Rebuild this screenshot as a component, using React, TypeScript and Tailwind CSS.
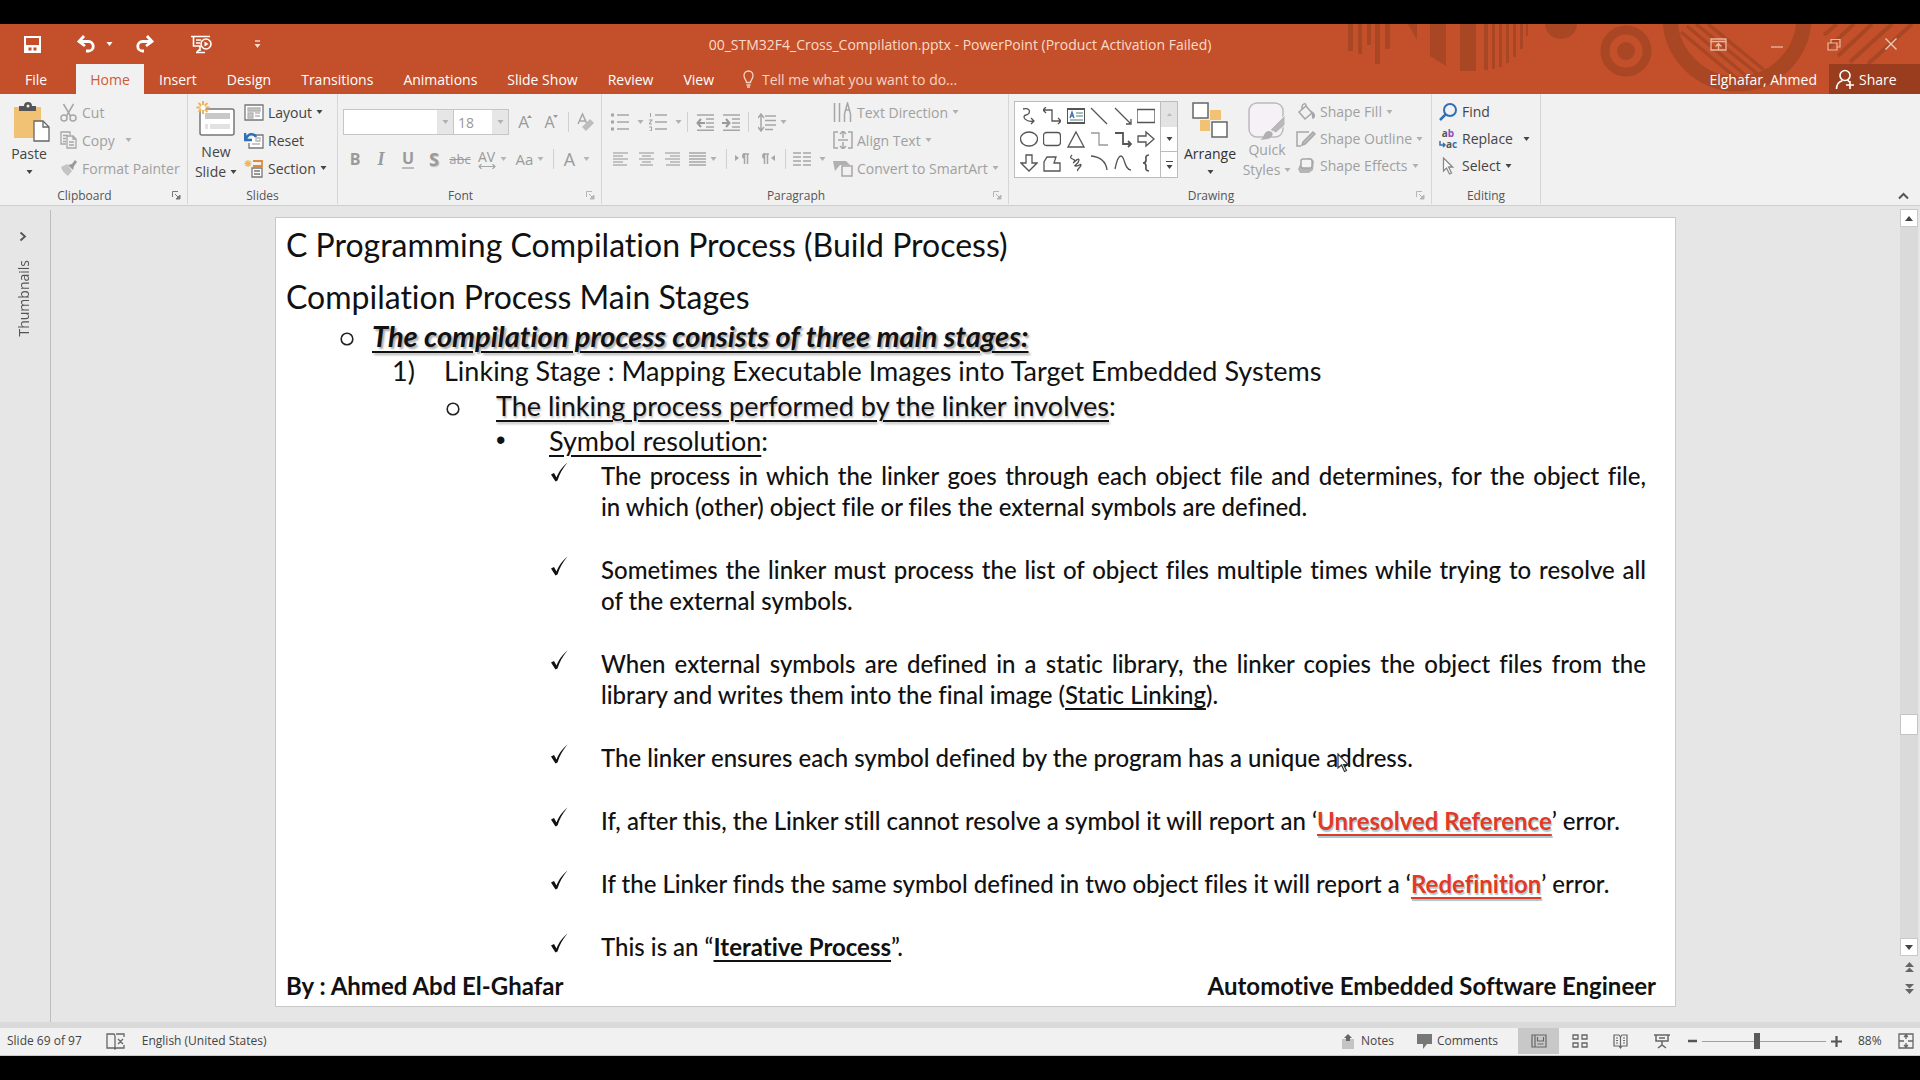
import type { ReactNode } from "react";

const GREY = "#a6a6a6";
const DARK = "#555555";

type SvgProps = { w: number; h: number; children: ReactNode; stroke?: string; sw?: number; className?: string };

function Svg({ w, h, children, stroke = GREY, sw = 1.5, className = "" }: SvgProps) {
  return (
    <svg width={w} height={h} viewBox={`0 0 ${w} ${h}`} fill="none" stroke={stroke} strokeWidth={sw} className={`shrink-0 ${className}`} aria-hidden="true">
      {children}
    </svg>
  );
}

function Caret({ color = "#444444" }: { color?: string }) {
  return (
    <svg width="7" height="4" viewBox="0 0 7 4" className="shrink-0" aria-hidden="true">
      <path d="M0.5 0h6L3.5 4z" fill={color} />
    </svg>
  );
}

function Sep() {
  return <span className="h-5 w-px shrink-0 bg-[#d0d0d0]" />;
}

function Launcher({ dim = false }: { dim?: boolean }) {
  return (
    <button type="button" aria-label="More options" className="absolute bottom-0.5 right-1 p-0.5">
      <Svg w={9} h={9} stroke={dim ? "#b5b5b5" : "#777777"} sw={1}>
        <path d="M0.5 6V0.5H6" />
        <path d="M3 3l4 4M8 4v4H4z" fill={dim ? "#b5b5b5" : "#777777"} />
      </Svg>
    </button>
  );
}

function Group({ label, width, launcher, children }: { label: string; width: string; launcher?: "on" | "dim"; children: ReactNode }) {
  return (
    <section aria-label={label} className={`relative flex shrink-0 flex-col border-r border-[#d6d6d6] ${width}`}>
      <div className="flex flex-1">{children}</div>
      <div className={`text-center text-[12px] leading-4 text-[#555555] ${launcher ? "pr-[18px]" : ""}`}>{label}</div>
      {launcher && <Launcher dim={launcher === "dim"} />}
    </section>
  );
}

function RowButton({ icon, label, caret, dim, wide, tight }: { icon: ReactNode; label: string; caret?: boolean; dim?: boolean; wide?: boolean; tight?: boolean }) {
  return (
    <button type="button" className={`flex items-center gap-1 whitespace-nowrap text-[14px] ${tight ? "h-[27px]" : "h-7"} ${dim ? "text-[#a0a0a0]" : "text-[#444444]"}`}>
      <span className="flex w-5 justify-center">{icon}</span>
      {label}
      {caret && (
        <span className={wide ? "ml-1.5" : ""}>
          <Caret color={dim ? "#b0b0b0" : "#444444"} />
        </span>
      )}
    </button>
  );
}

function IconButton({ label, width = "w-[26px]", children }: { label: string; width?: string; children: ReactNode }) {
  return (
    <button type="button" aria-label={label} className={`flex h-6 shrink-0 items-center justify-center gap-1 text-[#9a9a9a] ${width}`}>
      {children}
    </button>
  );
}

function Lines({ rows }: { rows: [number, number][] }) {
  return <path d={rows.map(([a, b], i) => `M${a} ${2 + i * 3}H${b}`).join("")} />;
}

function TitleBar() {
  return (
    <div className="relative grid h-10 grid-cols-[1fr_auto_1fr] items-center text-white">
      <div className="flex items-center pl-6">
        <button type="button" aria-label="Save">
          <Svg w={17} h={17} stroke="#ffffff" sw={2}>
            <path d="M1 1h15v15H1z" />
            <path d="M1 9h15v7H1z" fill="#ffffff" stroke="none" />
            <path d="M4.5 11.5h3v3h-3zM9.5 11.5h3v3h-3z" fill="#c3502a" stroke="none" />
          </Svg>
        </button>
        <button type="button" aria-label="Undo" className="ml-9">
          <Svg w={19} h={18} stroke="#ffffff" sw={2.8}>
            <path d="M7 1L2 6.500l6 4.500M2.500 6.500h9a4.500 4.500 0 010 9.500H9" />
          </Svg>
        </button>
        <button type="button" aria-label="Undo history" className="ml-[10px]">
          <Caret color="#ffffff" />
        </button>
        <button type="button" aria-label="Redo" className="ml-[22px]">
          <Svg w={19} h={18} stroke="#ffffff" sw={2.8}>
            <path d="M12 1l5 5.500-6 4.500M16.500 6.500h-9a4.500 4.500 0 000 9.500H9" />
          </Svg>
        </button>
        <button type="button" aria-label="Start from beginning" className="ml-[37px]">
          <Svg w={21} h={19} stroke="#ffffff" sw={1.6}>
            <path d="M0 1.500h19M2.500 1.500v9.500h7M5 5h5M5 8h4M9 11v5M5 17.500h9M9 14l-3 3" />
            <circle cx="15" cy="9" r="5" />
            <path d="M13.500 6.500v5l4-2.500z" fill="#ffffff" stroke="none" />
          </Svg>
        </button>
        <button type="button" aria-label="Customize quick access" className="ml-[42px]">
          <Svg w={7} h={9} stroke="#f8d8cc" sw={1.4}>
            <path d="M1 1h5" />
            <path d="M0.500 4h6l-3 4z" fill="#f8d8cc" stroke="none" />
          </Svg>
        </button>
      </div>
      <h1 className="whitespace-nowrap text-[14px] text-[#fbdccb]">00_STM32F4_Cross_Compilation.pptx - PowerPoint (Product Activation Failed)</h1>
      <div className="flex items-center justify-end gap-[43px] pr-[22px]">
        <button type="button" aria-label="Ribbon display options">
          <Svg w={17} h={13} stroke="#e9b8a4" sw={1.3}>
            <path d="M1 1h15v11H1zM1 3.500h15M8.500 12V6M5.500 8.500l3-3 3 3" />
          </Svg>
        </button>
        <button type="button" aria-label="Minimize">
          <Svg w={14} h={13} stroke="#e9b8a4" sw={1.3}>
            <path d="M1 9h12" />
          </Svg>
        </button>
        <button type="button" aria-label="Restore">
          <Svg w={14} h={13} stroke="#e9b8a4" sw={1.2}>
            <path d="M1 5h9v7H1zM4 5V1.500h9V9h-3" />
          </Svg>
        </button>
        <button type="button" aria-label="Close">
          <Svg w={14} h={14} stroke="#f0cbbb" sw={1.4}>
            <path d="M1.500 1.500l11 11M12.500 1.500l-11 11" />
          </Svg>
        </button>
      </div>
    </div>
  );
}

function HeaderArt() {
  return (
    <svg width="580" height="70" viewBox="1340 24 580 70" className="absolute right-0 top-0" fill="#a94725" stroke="none" aria-hidden="true">
      <path d="M1348 24h5v27h-5zM1358 24h4v30h-4zM1367 24h4v21h-4zM1375 24h5v40h-5zM1385 24h5v25h-5zM1408 24h9v16z" />
      <path d="M1430 24h16v42l-16-10zM1460 24h16v47h-16zM1484 24h4v46h-4zM1492 24h3v45h-3zM1499 24h3v43h-3zM1506 24h3v39h-3zM1513 24h3v33h-3zM1520 24h3v25h-3zM1526 24h2v12h-2z" />
      <path d="M1545 24a16 15 0 0032 0z" />
      <circle cx="1626" cy="51" r="21" fill="none" stroke="#a94725" strokeWidth="9" />
      <circle cx="1626" cy="51" r="9" />
      <circle cx="1737" cy="17" r="67" fill="none" stroke="#a94725" strokeWidth="15" />
      <path d="M1681 32l60 50M1687 26l64 54M1696 24l64 52M1708 24l56 46" stroke="#a94725" strokeWidth="3.500" />
      <path d="M1824 35l13-11M1828 48l26-24M1838 56l34-32M1850 62l42-38M1868 64l44-40" stroke="#a94725" strokeWidth="4" />
    </svg>
  );
}

function TabBar() {
  const tabs = ["Insert", "Design", "Transitions", "Animations", "Slide Show", "Review", "View"];
  return (
    <nav className="relative flex h-[30px] items-stretch text-[14px] text-white" aria-label="Ribbon tabs">
      <button type="button" className="w-[76px] pr-1">File</button>
      <button type="button" className="w-[68px] bg-[#f1f1f1] text-[#cf5a33]">Home</button>
      {tabs.map((t) => (
        <button key={t} type="button" className="whitespace-nowrap px-[15px]">{t}</button>
      ))}
      <div className="ml-[14px] flex items-center gap-2">
        <Svg w={11} h={18} stroke="#f9d3c2" sw={1.3}>
          <path d="M3.500 12.500C3.500 10 1 9 1 5.500a4.500 4.500 0 019 0c0 3.500-2.500 4.500-2.500 7zM3.500 15h4M4 17h3" />
        </Svg>
        <input aria-label="Tell me what you want to do" className="w-[230px] bg-transparent outline-none placeholder:text-[#f9d3c2]" placeholder="Tell me what you want to do..." />
      </div>
      <div className="ml-auto flex">
        <button type="button" className="px-3">Elghafar, Ahmed</button>
        <button type="button" className="flex w-[91px] items-center gap-1 bg-[#9a3d1e] pl-1.5">
          <Svg w={20} h={21} stroke="#ffffff" sw={1.6}>
            <circle cx="10" cy="6.500" r="5" />
            <path d="M1.500 20c0-5 3-7.500 6-8.500M12.500 11l2 2M15 12v8M11 16h8" />
          </Svg>
          Share
        </button>
      </div>
    </nav>
  );
}

function Clipboard() {
  return (
    <Group label="Clipboard" width="w-[188px]" launcher="on">
      <button type="button" className="flex w-[58px] flex-col items-center pt-2 text-[14px] text-[#444444]">
        <svg width="36" height="40" viewBox="0 0 36 40" className="ml-1.5" aria-hidden="true">
          <path d="M0 5h27v31H0z" fill="#f2c274" />
          <path d="M5 4h5a4 4 0 018 0h4v5H5z" fill="#555" />
          <circle cx="14" cy="4" r="1.500" fill="#f1f1f1" />
          <path d="M20 19h9l6 6v14H20z" fill="#fff" stroke="#666" strokeWidth="1.300" />
          <path d="M29 19v6h6" fill="none" stroke="#666" strokeWidth="1.300" />
        </svg>
        <span className="leading-6">Paste</span>
        <span className="pt-1"><Caret /></span>
      </button>
      <div className="flex flex-col pt-1">
        <RowButton dim label="Cut" icon={<Svg w={17} h={19}><path d="M3.500 1l7 12M13.500 1l-7 12" /><circle cx="4" cy="15" r="3" /><circle cx="13" cy="15" r="3" /></Svg>} />
        <RowButton dim caret wide label="Copy" icon={<Svg w={17} h={18} sw={1.300}><path d="M10 4V1H1v12h5M3 4.500h5M3 7.500h3M3 10.500h3M7 5h6l3 3v9H7zM13 5v3h3M9 11h5M9 14h5" /></Svg>} />
        <RowButton dim label="Format Painter" icon={<Svg w={17} h={17} stroke="none"><path d="M1 7l6-3 5 7-4 5c-3-2-6-5-7-9z" fill="#c4c4c4" /><path d="M8 5l4-1 3-4 2 2-3 4-1 4z" fill="#999" /></Svg>} />
      </div>
    </Group>
  );
}

function Slides() {
  return (
    <Group label="Slides" width="w-[150px]">
      <button type="button" className="flex w-[56px] flex-col items-center pt-1.5 text-[14px] leading-5 text-[#444444]">
        <svg width="40" height="38" viewBox="0 0 40 38" className="shrink-0" aria-hidden="true">
          <rect x="4" y="9" width="34" height="26" rx="2" fill="#fff" stroke="#777" strokeWidth="1.500" />
          <path d="M9 13h25v6H9z" fill="#c8c8c8" />
          <path d="M9 24h3v5H9zM14 24h20v5H14z" fill="#e2e2e2" />
          <path d="M7 1v13M.5 7.500h13M2.500 3l9 9M11.500 3l-9 9" stroke="#eeb65c" strokeWidth="2" />
          <circle cx="7" cy="7.500" r="2.500" fill="#fff" />
        </svg>
        <span className="pt-1">New</span>
        <span className="flex items-center gap-1">Slide <Caret /></span>
      </button>
      <div className="flex flex-col pt-1">
        <RowButton caret label="Layout" icon={<Svg w={20} h={17} stroke="#777" sw={1.300}><path d="M1 1h18v15H1z" fill="#fff" /><path d="M4 4h12v3H4zM4 9h5v5H4zM11 9h5M11 12h5" fill="#c4c4c4" stroke="#b5b5b5" /></Svg>} />
        <RowButton label="Reset" icon={<Svg w={20} h={17} stroke="#777" sw={1.300}><path d="M10 3h9v13H5v-5" fill="#fff" /><path d="M12 6h4v3h-4zM8 12h8" stroke="#b5b5b5" /><path d="M1 1v7h7M2 7c2-6 8-6 10-2" stroke="#2f6fb5" strokeWidth="2.500" /></Svg>} />
        <RowButton caret label="Section" icon={<Svg w={20} h={19} stroke="#777" sw={1.300}><path d="M9 2h9v5H9" stroke="#e08b3c" strokeWidth="1.800" /><path d="M8 9h10v9H8zM10 12h6M10 15h6" fill="#fff" /><path d="M4 1v7M.5 4.500h7M1.500 2l5 5M6.500 2l-5 5" stroke="#eeb65c" /></Svg>} />
      </div>
    </Group>
  );
}

function FontGroup() {
  return (
    <Group label="Font" width="w-[264px]" launcher="dim">
      <div className="flex flex-col pl-[5px] pt-[15px]">
        <div className="flex h-[26px] items-center">
          <span className="relative flex h-[26px] w-[111px] border border-[#c6c6c6] bg-white">
            <select aria-label="Font" className="w-full appearance-none bg-transparent px-1 text-[14px]">
              <option></option>
            </select>
            <span className="pointer-events-none flex w-4 shrink-0 items-center justify-center bg-[#e6e6e6]"><Caret color="#b0b0b0" /></span>
          </span>
          <span className="relative flex h-[26px] w-[55px] border border-l-0 border-[#c6c6c6] bg-white">
            <select aria-label="Font size" className="w-full appearance-none bg-transparent px-1 text-[14px] text-[#999999]">
              <option>18</option>
            </select>
            <span className="pointer-events-none flex w-4 shrink-0 items-center justify-center bg-[#e6e6e6]"><Caret color="#b0b0b0" /></span>
          </span>
          <span className="w-[3px]" />
          <IconButton label="Increase font size"><span className="text-[17px]">A</span><span className="-ml-1.5 -mt-3"><svg width="5" height="3" viewBox="0 0 5 3" aria-hidden="true"><path d="M0 3h5L2.500 0z" fill="#999" /></svg></span></IconButton>
          <IconButton label="Decrease font size"><span className="text-[16px]">A</span><span className="-ml-1.5 -mt-3"><svg width="5" height="3" viewBox="0 0 5 3" aria-hidden="true"><path d="M0 0h5L2.500 3z" fill="#999" /></svg></span></IconButton>
          <span className="w-1" />
          <Sep />
          <span className="w-1" />
          <IconButton label="Clear formatting">
            <Svg w={18} h={20}><path d="M1 12L5.500 2 10 12M2.500 9h6" /><path d="M5 15l8-8 4 4-8 8z" fill="#bdbdbd" stroke="none" /></Svg>
          </IconButton>
        </div>
        <div className="flex h-[47px] items-center text-[16px] leading-6">
          <IconButton label="Bold" width="w-[24px]"><b>B</b></IconButton>
          <IconButton label="Italic" width="w-[28px]"><i className="font-['Liberation_Serif'] text-[18px] font-bold">I</i></IconButton>
          <IconButton label="Underline"><span className="border-b-2 border-[#bbbbbb] font-bold leading-[18px]">U</span></IconButton>
          <IconButton label="Shadow"><b className="text-[18px] [text-shadow:1px_1px_1px_#bbb]">S</b></IconButton>
          <IconButton label="Strikethrough"><span className="text-[13px] line-through">abc</span></IconButton>
          <IconButton label="Character spacing" width="w-[38px]">
            <span className="flex flex-col items-center"><span className="text-[14px] leading-[15px]">AV</span><Svg w={18} h={5} sw={1.200}><path d="M1 2.500h16M3.500 0L1 2.500 3.500 5M14.500 0L17 2.500 14.500 5" /></Svg></span>
            <Caret color="#b5b5b5" />
          </IconButton>
          <IconButton label="Change case" width="w-[38px]"><span className="text-[15px]">Aa</span><Caret color="#b5b5b5" /></IconButton>
          <span className="w-1" />
          <Sep />
          <IconButton label="Font color" width="w-[46px]"><span className="pr-1 text-[18px]">A</span><Caret color="#b5b5b5" /></IconButton>
        </div>
      </div>
    </Group>
  );
}

function Paragraph() {
  const c = "#b0b0b0";
  return (
    <Group label="Paragraph" width="w-[407px]" launcher="dim">
      <div className="flex w-[228px] shrink-0 flex-col pl-1.5 pt-[15px]">
        <div className="flex h-[26px] items-center">
          <IconButton label="Bullets" width="w-[38px]">
            <Svg w={18} h={18}><path d="M6 2h12M6 9h12M6 16h12" /><path d="M0 2h3M0 9h3M0 16h3" strokeWidth="3" /></Svg>
            <span className="pl-1"><Caret color={c} /></span>
          </IconButton>
          <IconButton label="Numbering" width="w-[38px]">
            <Svg w={18} h={18}><path d="M6 2h12M6 9h12M6 16h12" /><path d="M1.500 0v4M0 7h3L0 11h3M0 14h2.500v4H0" strokeWidth="1.100" /></Svg>
            <span className="pl-1"><Caret color={c} /></span>
          </IconButton>
          <span className="w-[3px]" />
          <Sep />
          <span className="w-1" />
          <IconButton label="Decrease indent"><Svg w={18} h={17} sw={1.500}><path d="M1 1h17M10 5h8M10 9h8M10 13h8M1 16.300h17" /><path d="M9 9H2M5 5L1.500 9 5 13" stroke="#999" strokeWidth="2" /></Svg></IconButton>
          <IconButton label="Increase indent"><Svg w={18} h={17} sw={1.500}><path d="M1 1h17M10 5h8M10 9h8M10 13h8M1 16.300h17" /><path d="M0 9h7M4 5l3.500 4L4 13" stroke="#999" strokeWidth="2" /></Svg></IconButton>
          <span className="w-1" />
          <Sep />
          <span className="w-1" />
          <IconButton label="Line spacing" width="w-[38px]">
            <Svg w={18} h={19}><path d="M7 3h11M7 7.500h11M7 12h11M7 16.500h8" /><path d="M3 1v17M0 5l3-4 3 4M0 14l3 4 3-4" /></Svg>
            <Caret color={c} />
          </IconButton>
        </div>
        <div className="flex h-[47px] items-center">
          <IconButton label="Align left"><Svg w={16} h={16} stroke="#c2c2c2" sw={2}><Lines rows={[[0, 15], [0, 10], [0, 15], [0, 10], [0, 14]]} /></Svg></IconButton>
          <IconButton label="Center"><Svg w={16} h={16} stroke="#c2c2c2" sw={2}><Lines rows={[[0, 15], [3, 12], [0, 15], [3, 12], [1, 14]]} /></Svg></IconButton>
          <IconButton label="Align right"><Svg w={16} h={16} stroke="#c2c2c2" sw={2}><Lines rows={[[0, 15], [5, 15], [0, 15], [5, 15], [1, 15]]} /></Svg></IconButton>
          <IconButton label="Justify" width="w-[34px]"><Svg w={17} h={16}><Lines rows={[[0, 17], [0, 17], [0, 17], [0, 17], [0, 17]]} /></Svg><Caret color={c} /></IconButton>
          <span className="w-1.5" />
          <Sep />
          <span className="w-0.5" />
          <IconButton label="Left to right"><Svg w={16} h={14}><path d="M1 3l4 3-4 3z" fill={GREY} stroke="none" /><path d="M10.500 2v10M13.500 2v10M15 2H9.500" /><path d="M11 1a3 3 0 000 6z" fill={GREY} stroke="none" /></Svg></IconButton>
          <IconButton label="Right to left"><Svg w={16} h={14}><path d="M15 3l-4 3 4 3z" fill={GREY} stroke="none" /><path d="M4.500 2v10M7.500 2v10M9 2H3.500" /><path d="M5 1a3 3 0 000 6z" fill={GREY} stroke="none" /></Svg></IconButton>
          <span className="w-1" />
          <Sep />
          <span className="w-1" />
          <IconButton label="Columns" width="w-[38px]"><Svg w={18} h={16}><path d="M0 2h8M10 2h8M0 6h8M10 6h8M0 10h8M10 10h8M0 14h8M10 14h8" /></Svg><span className="pl-1"><Caret color={c} /></span></IconButton>
        </div>
      </div>
      <div className="flex flex-col pl-[3px] pt-1">
        <RowButton dim caret label="Text Direction" icon={<Svg w={20} h={20}><path d="M1.500 1v19M6.500 1v19M11.500 20v-8M17.500 20v-8M11.500 12L14.500 1l3 11M12 8h5" /></Svg>} />
        <RowButton dim caret label="Align Text" icon={<Svg w={20} h={18}><path d="M5 1H1v16h4M15 1h4v16h-4M5 9h10M10 0v7M7 3l3-3 3 3M10 11v7M7 15l3 3 3-3" /></Svg>} />
        <RowButton dim caret label="Convert to SmartArt" icon={<Svg w={20} h={17}><path d="M0 1h13l4 4H7l-5 6z" fill="#b0b0b0" stroke="none" /><path d="M9 6h10v10H9z" fill="#f1f1f1" /></Svg>} />
      </div>
    </Group>
  );
}

const SHAPES: { name: string; node: ReactNode }[] = [
  { name: "Curved connector", node: <path d="M3 2c8-2 8 5 3 6s0 8 8 6M11 11l3 3-3 3" /> },
  { name: "Elbow connector", node: <path d="M1 3h8v11h9M3 0L0 3l3 3M15 11l3 3-3 3" /> },
  { name: "Text box", node: <><path d="M0 2h18v14H0z" strokeWidth="2" /><path d="M3 11l2-6 2 6M3.500 9h3" stroke="#3f6fb0" /><path d="M9 6h7M9 9h7M3 13h13" stroke="#8aa" /></> },
  { name: "Line", node: <path d="M1 1l16 16" /> },
  { name: "Arrow line", node: <path d="M1 1l16 16M17 12v5h-5" /> },
  { name: "Rectangle", node: <path d="M0 2.500h18v13H0z" /> },
  { name: "Oval", node: <ellipse cx="9" cy="9" rx="8.500" ry="7" /> },
  { name: "Rounded rectangle", node: <rect x="0.500" y="2.500" width="17" height="13" rx="3" /> },
  { name: "Triangle", node: <path d="M9 2l8 15H1z" /> },
  { name: "Elbow", node: <path d="M1 3h8v12h9" stroke="#999" /> },
  { name: "Elbow arrow", node: <path d="M1 3h8v11h8M14 11l3 3-3 3" strokeWidth="1.800" /> },
  { name: "Right arrow", node: <path d="M1 6h8V2l8 7-8 7v-4H1z" /> },
  { name: "Down arrow", node: <path d="M6 1v8H1l8 8 8-8h-5V1z" /> },
  { name: "Freeform", node: <path d="M4 3h9l-2 6h6v8H1V8z" /> },
  { name: "Scribble", node: <path d="M5 1c-5 5 5 3 2 7s5-6 5-2-7 6-3 6 5-3 5-1-5 5-3 6" /> },
  { name: "Arc", node: <path d="M1 2c10 1 15 6 16 14" /> },
  { name: "Curve", node: <path d="M1 15C3 5 5 2 7 2c4 0 3 14 10 14" /> },
  { name: "Brace", node: <path d="M12 1C8 1 9 4 9 6s-1 3-3 3c2 0 3 1 3 3s-1 5 3 5" strokeWidth="1.700" /> },
];

function Drawing() {
  return (
    <Group label="Drawing" width="w-[423px]" launcher="dim">
      <div className="flex pl-[5px] pt-[7px]">
        <div className="flex h-[77px] w-[164px] border border-[#bcbcbc] bg-white">
          <div className="grid flex-1 grid-cols-6 grid-rows-3 p-0.5">
            {SHAPES.map((s) => (
              <button key={s.name} type="button" aria-label={s.name} className="flex items-center justify-center">
                <Svg w={18} h={18} stroke={DARK} sw={1.300}>{s.node}</Svg>
              </button>
            ))}
          </div>
          <div className="flex w-[17px] flex-col border-l border-[#bcbcbc]">
            <button type="button" aria-label="Scroll up" className="flex flex-1 items-center justify-center bg-[#e3e3e3]"><svg width="5" height="3" viewBox="0 0 5 3" aria-hidden="true"><path d="M0 3h5L2.500 0z" fill="#bbb" /></svg></button>
            <button type="button" aria-label="Scroll down" className="flex flex-1 items-center justify-center border-b border-[#bcbcbc]"><Caret /></button>
            <button type="button" aria-label="More shapes" className="flex flex-1 flex-col items-center justify-center gap-[3px]"><span className="h-px w-[7px] bg-[#444444]" /><Caret /></button>
          </div>
        </div>
      </div>
      <button type="button" className="ml-1.5 flex w-[52px] flex-col items-center pt-2 text-[14px] text-[#333333]">
        <svg width="36" height="40" viewBox="0 0 36 40" className="shrink-0" aria-hidden="true">
          <path d="M18 8h11v10H18zM8 18h10v11H8z" fill="#f2c274" />
          <path d="M1 1h15v15H1zM20 20h15v15H20z" fill="#fff" stroke="#666" strokeWidth="1.500" />
        </svg>
        <span className="leading-6">Arrange</span>
        <span className="pt-1"><Caret /></span>
      </button>
      <button type="button" className="ml-1 flex w-[54px] flex-col items-center pt-2 text-[14px] leading-5 text-[#a0a0a0]">
        <svg width="38" height="38" viewBox="0 0 38 38" className="shrink-0" aria-hidden="true">
          <rect x="1" y="1" width="34" height="34" rx="8" fill="#f5f1f6" stroke="#bbb" strokeWidth="1.500" />
          <path d="M12 38c5-2 3-9 9-9 6 1 4 6-1 8z" fill="#b0b0b0" />
          <path d="M22 28L37 13v10l-9 8z" fill="#b8b8b8" stroke="#f1f1f1" />
        </svg>
        <span className="whitespace-nowrap">Quick</span>
        <span className="flex items-center gap-1">Styles <Caret color="#b0b0b0" /></span>
      </button>
      <div className="flex flex-col pl-0.5 pt-1">
        <RowButton tight dim caret label="Shape Fill" icon={<Svg w={18} h={18}><path d="M2 9l7-6 6 7-7 6zM9 3c0-4-4-2-4 1v3" /><path d="M15 9c3 2 3 5 1 6z" fill={GREY} /></Svg>} />
        <RowButton tight dim caret label="Shape Outline" icon={<Svg w={20} h={18}><path d="M13 2H1v14h4" /><path d="M7 12L17 2l2 2L9 14l-3 1z" fill="#c0c0c0" /></Svg>} />
        <RowButton tight dim caret label="Shape Effects" icon={<Svg w={18} h={17}><path d="M1 12L5 3l8-2 4 3-1 9-4 3H3z" fill="#b5b5b5" stroke="none" /><rect x="4" y="2" width="11" height="9" rx="2" fill="#f4f4f4" /></Svg>} />
      </div>
    </Group>
  );
}

function Editing() {
  return (
    <Group label="Editing" width="w-[109px]">
      <div className="flex flex-col pl-1.5 pt-1">
        <RowButton tight label="Find" icon={<Svg w={18} h={18} stroke="#2f6fb5" sw={2}><circle cx="11" cy="7" r="6" /><path d="M7 11l-6 6" strokeWidth="2.500" /></Svg>} />
        <RowButton
          tight
          caret
          wide
          label="Replace"
          icon={
            <span className="flex flex-col text-[10px] font-bold leading-[11px] text-[#555555]">
              <span>a<span className="text-[#8b4fc0]">b</span></span>
              <span className="flex items-center"><Svg w={7} h={7} stroke="#2f6fb5"><path d="M1 0v4h5M4 2l2 2-2 2" /></Svg>a<span className="text-[#2f6fb5]">c</span></span>
            </span>
          }
        />
        <RowButton tight caret label="Select" icon={<Svg w={12} h={18} stroke="#888" sw={1.300}><path d="M1.500 1v13l3-3 3 6 2-1-3-6h4z" fill="#fff" /></Svg>} />
      </div>
    </Group>
  );
}

function Ribbon() {
  return (
    <div className="relative flex h-[112px] border-b border-[#cfcfcf] bg-[#f1f1f1] pb-px">
      <Clipboard />
      <Slides />
      <FontGroup />
      <Paragraph />
      <Drawing />
      <Editing />
      <button type="button" aria-label="Collapse the ribbon" className="ml-auto self-end px-[11px] pb-1">
        <Svg w={11} h={8} stroke="#555" sw={2}><path d="M1 6.500L5.500 2 10 6.500" /></Svg>
      </button>
    </div>
  );
}

function Check() {
  return (
    <svg width="18" height="20" viewBox="0 0 18 20" className="mt-0.5 shrink-0" aria-hidden="true">
      <path d="M1 12.500l3-1.500 2.500 4.500C9 9.500 12 5 17.500 0.500 12.500 6.500 9.500 12 7.500 18.500L5.500 19.500z" fill="#111" />
    </svg>
  );
}

function RingBullet() {
  return (
    <svg width="14" height="14" viewBox="0 0 14 14" className="mt-3.5 shrink-0" fill="none" stroke="#222" strokeWidth="1.600" aria-hidden="true">
      <circle cx="7" cy="7" r="5.800" />
    </svg>
  );
}

const RED = "font-bold text-[#e23a26] underline decoration-2 underline-offset-4 [text-shadow:1px_2px_1px_#a9cdd0]";

const POINTS: ReactNode[] = [
  "The process in which the linker goes through each object file and determines, for the object file, in\u00a0which (other) object file or files the external symbols are defined.",
  "Sometimes the linker must process the list of object files multiple times while trying to resolve all of\u00a0the external symbols.",
  <>When external symbols are defined in a static library, the linker copies the object files from the library and writes them into the final image (<u className="decoration-2 underline-offset-4">Static Linking</u>).</>,
  "The linker ensures each symbol defined by the program has a unique address.",
  <>If, after this, the Linker still cannot resolve a symbol it will report an ‘<span className={RED}>Unresolved Reference</span>’ error.</>,
  <>If the Linker finds the same symbol defined in two object files it will report a ‘<span className={RED}>Redefinition</span>’ error.</>,
  <>This is an “<b className="underline decoration-2 underline-offset-4">Iterative Process</b>”.</>,
];

function Slide() {
  return (
    <article className="relative flex flex-1 flex-col border border-[#c9c9c9] bg-white px-[10px] font-['Lato',sans-serif] text-[27px] leading-[35px] text-[#111111] [font-variant-ligatures:none]">
      <h2 className="pt-1 text-[32px] leading-[46px]">C Programming Compilation Process (Build Process)</h2>
      <h2 className="pt-2 text-[32px] leading-[42px]">Compilation Process Main Stages</h2>
      <div className="flex pl-[54px]">
        <span className="w-8"><RingBullet /></span>
        <span className="text-[29px] font-bold italic underline decoration-2 underline-offset-4 [text-shadow:2px_2px_2px_#aaa]">The compilation process consists of three main stages:</span>
      </div>
      <div className="flex pl-[106px]">
        <span className="w-[52px]">1)</span>
        <span>Linking Stage : Mapping Executable Images into Target Embedded Systems</span>
      </div>
      <div className="flex pl-[160px]">
        <span className="w-[50px]"><RingBullet /></span>
        <span><span className="underline decoration-2 underline-offset-4 [text-shadow:1px_2px_2px_#bbb]">The linking process performed by the linker involves</span>:</span>
      </div>
      <div className="flex pl-[210px]">
        <span className="w-[53px] font-['Liberation_Sans']">•</span>
        <span><span className="underline decoration-2 underline-offset-4">Symbol resolution</span>:</span>
      </div>
      <ul className="flex flex-col gap-8 pl-[264px] pr-[19px] pt-0.5 text-[24px] font-medium leading-[31px]">
        {POINTS.map((p, i) => (
          <li key={i} className="flex gap-[33px]">
            <Check />
            <p className="flex-1 text-justify">{p}</p>
          </li>
        ))}
      </ul>
      <div className="mt-auto flex justify-between pb-[3px] pr-[9px] text-[24px] font-bold">
        <span>By : Ahmed Abd El-Ghafar</span>
        <span>Automotive Embedded Software Engineer</span>
      </div>
      <svg width="13" height="20" viewBox="0 0 13 20" className="absolute left-[1061px] top-[535px]" aria-hidden="true">
        <path d="M1 1v14l3.500-3 3 6.500 2-1-3-6h4.500z" fill="#fff" stroke="#333" strokeWidth="1.200" />
      </svg>
    </article>
  );
}

function ScrollBar() {
  const box = "flex h-[18px] items-center justify-center border border-[#c9c9c9] bg-white";
  return (
    <aside className="flex w-[20px] shrink-0 flex-col pb-7 pr-0.5 pt-[3px]" aria-label="Slide scroll bar">
      <button type="button" aria-label="Scroll up" className={box}><svg width="8" height="5" viewBox="0 0 8 5" aria-hidden="true"><path d="M0 5h8L4 0z" fill="#444" /></svg></button>
      <div className="flex flex-1 flex-col bg-[#dadada]">
        <div className="grow-[487]" />
        <div className="h-[21px] border border-[#c4c4c4] bg-white" />
        <div className="grow-[203]" />
      </div>
      <button type="button" aria-label="Scroll down" className={box}><svg width="8" height="5" viewBox="0 0 8 5" aria-hidden="true"><path d="M0 0h8L4 5z" fill="#444" /></svg></button>
      <button type="button" aria-label="Previous slide" className="flex justify-center pt-[6px]"><svg width="9" height="11" viewBox="0 0 9 11" aria-hidden="true"><path d="M0 5h9L4.500 0zM0 10h9L4.500 5.500z" fill="#666" /></svg></button>
      <button type="button" aria-label="Next slide" className="flex justify-center pt-[10px]"><svg width="9" height="11" viewBox="0 0 9 11" aria-hidden="true"><path d="M0 1h9L4.500 5.500zM0 6h9L4.500 11z" fill="#666" /></svg></button>
    </aside>
  );
}

function StatusBar() {
  const S = "#666666";
  const view = "flex h-full w-[41px] items-center justify-center";
  return (
    <footer className="flex h-[34px] shrink-0 items-stretch border-b border-t-[6px] border-b-[#b9cfe0] border-t-[#dadada] bg-[#f1f1f1] pb-px text-[12px] text-[#444444]">
      <span className="flex items-center pl-[7px]">Slide 69 of 97</span>
      <button type="button" aria-label="Spelling" className="ml-6">
        <Svg w={19} h={17} stroke={S} sw={1.300}><path d="M9 3L8 1H1v14h7l1 1 1-1h8v-3M9 3v13M10 1h8v3M12 6l5 5M17 6l-5 5" /></Svg>
      </button>
      <button type="button" className="ml-[17px]">English (United States)</button>
      <div className="ml-auto flex items-stretch">
        <button type="button" className="flex items-center gap-[7px]">
          <Svg w={12} h={16} stroke="none"><path d="M0 6h12v10H0z" fill="#c4c4c4" /><path d="M2 5l4-4 4 4zM4 5h4v3H4z" fill={S} /></Svg>
          Notes
        </button>
        <button type="button" className="ml-[23px] flex items-center gap-[5px]">
          <Svg w={15} h={15} stroke="none"><path d="M0 0h15v10h-5l-4 5v-5H0z" fill="#777" /></Svg>
          Comments
        </button>
        <div className="ml-5 flex">
          <button type="button" aria-label="Normal view" className={`${view} bg-[#c8c8c8]`}><Svg w={16} h={14} stroke={S} sw={1.200}><path d="M1 1h14v12H1zM4 1v12M6.500 3v4h6V3M6.500 10h6" /></Svg></button>
          <button type="button" aria-label="Slide sorter" className={view}><Svg w={16} h={14} stroke={S} sw={1.300}><path d="M1 1h5v4H1zM10 1h5v4h-5zM1 9h5v4H1zM10 9h5v4h-5z" /></Svg></button>
          <button type="button" aria-label="Reading view" className={view}><Svg w={15} h={15} stroke={S} sw={1.200}><path d="M7.500 3L6 1H1v11h5l1.500 2L9 12h5V1H9zM7.500 3v11M3 4h2M3 6.500h2M3 9h2M10 4h2M10 6.500h2M10 9h2" /></Svg></button>
          <button type="button" aria-label="Slide show" className={view}><Svg w={16} h={15} stroke={S} sw={1.500}><path d="M0 1h16M2 1v6h12V1M8 7v4M4 14l4-3 4 3M5 4h6" /></Svg></button>
        </div>
        <button type="button" aria-label="Zoom out" className="ml-1.5"><Svg w={9} h={10} stroke="#555" sw={2.500}><path d="M0 5h9" /></Svg></button>
        <input
          type="range"
          aria-label="Zoom"
          min={0}
          max={100}
          defaultValue={44}
          className="mx-[5px] w-[124px] appearance-none self-center bg-[linear-gradient(#a0a0a0,#a0a0a0)] bg-[length:100%_1px] bg-center bg-no-repeat [&::-webkit-slider-thumb]:h-4 [&::-webkit-slider-thumb]:w-1.5 [&::-webkit-slider-thumb]:appearance-none [&::-webkit-slider-thumb]:bg-[#5a5a5a]"
        />
        <button type="button" aria-label="Zoom in"><Svg w={11} h={11} stroke="#555" sw={2.200}><path d="M0 5.500h11M5.500 0v11" /></Svg></button>
        <span className="flex w-[56px] items-center pl-4">88%</span>
        <button type="button" aria-label="Fit slide to window" className="pr-1.5">
          <Svg w={16} h={16} stroke={S} sw={1.300}><path d="M1 1h14v14H1zM8 1v5M8 10v5M1 8h5M10 8h5M6 4l2-2 2 2M6 12l2 2 2-2" /></Svg>
        </button>
      </div>
    </footer>
  );
}

export default function App() {
  return (
    <div className="flex min-h-screen flex-col bg-black py-6 font-['Open_Sans','Noto_Sans',sans-serif]">
      <header className="relative bg-[#c3502a]">
        <HeaderArt />
        <TitleBar />
        <TabBar />
      </header>
      <Ribbon />
      <main className="flex flex-1 bg-[#e6e6e6]">
        <aside className="mt-1 flex w-[51px] shrink-0 flex-col items-center gap-[18px] border-r border-[#bdbdbd] pr-1 pt-[21px]">
          <button type="button" aria-label="Expand thumbnails"><Svg w={8} h={11} stroke="#555" sw={1.800}><path d="M1.500 1.500l4.500 4-4.500 4" /></Svg></button>
          <span className="rotate-180 text-[14px] text-[#555555] [writing-mode:vertical-rl]">Thumbnails</span>
        </aside>
        <div className="flex flex-1 pb-[15px] pl-[224px] pr-[224px] pt-[11px]">
          <Slide />
        </div>
        <ScrollBar />
      </main>
      <StatusBar />
    </div>
  );
}
